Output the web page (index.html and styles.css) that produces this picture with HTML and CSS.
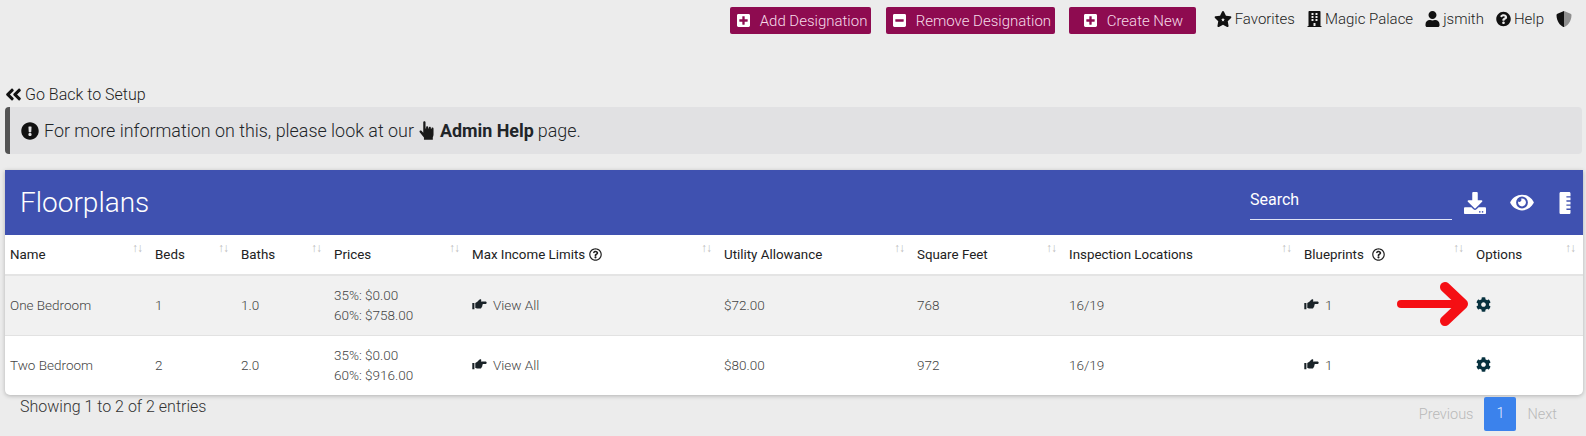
FILE: index.html
```html
<!DOCTYPE html>
<html lang="en">
<head>
    <meta charset="UTF-8">
    <title>Floorplans</title>
    <link rel="stylesheet" href="styles.css">
</head>
<body>
    <svg class="sprites" width="0" height="0">
        <symbol id="i-plus" viewBox="0 0 448 512"><path d="M400 32H48C21.5 32 0 53.5 0 80v352c0 26.5 21.5 48 48 48h352c26.5 0 48-21.5 48-48V80c0-26.5-21.5-48-48-48zm-32 252c0 6.6-5.4 12-12 12h-92v92c0 6.6-5.4 12-12 12h-56c-6.6 0-12-5.4-12-12v-92H92c-6.6 0-12-5.4-12-12v-56c0-6.6 5.4-12 12-12h92v-92c0-6.6 5.4-12 12-12h56c6.6 0 12 5.4 12 12v92h92c6.6 0 12 5.4 12 12v56z"/></symbol>
        <symbol id="i-minus" viewBox="0 0 448 512"><path d="M400 32H48C21.5 32 0 53.5 0 80v352c0 26.5 21.5 48 48 48h352c26.5 0 48-21.5 48-48V80c0-26.5-21.5-48-48-48zM92 296c-6.6 0-12-5.4-12-12v-56c0-6.6 5.4-12 12-12h264c6.6 0 12 5.4 12 12v56c0 6.6-5.4 12-12 12H92z"/></symbol>
        <symbol id="i-star" viewBox="0 0 576 512"><path fill-rule="evenodd" d="M259.3 17.8L194 150.2 47.9 171.5c-26.2 3.8-36.7 36.1-17.7 54.6l105.7 103-25 145.5c-4.5 26.3 23.2 46 46.4 33.7L288 439.6l130.7 68.7c23.2 12.2 50.9-7.4 46.4-33.7l-25-145.5 105.7-103c19-18.5 8.5-50.8-17.7-54.6L382 150.2 316.7 17.8c-11.7-23.6-45.6-23.9-57.4 0zM288 215l17 42 45 3-35 29 11 44-38-24-38 24 11-44-35-29 45-3z"/></symbol>
        <symbol id="i-building" viewBox="0 0 448 512"><path d="M436 480h-20V24c0-13.255-10.745-24-24-24H56C42.745 0 32 10.745 32 24v456H12c-6.627 0-12 5.373-12 12v20h448v-20c0-6.627-5.373-12-12-12zM128 76c0-6.627 5.373-12 12-12h40c6.627 0 12 5.373 12 12v40c0 6.627-5.373 12-12 12h-40c-6.627 0-12-5.373-12-12V76zm0 96c0-6.627 5.373-12 12-12h40c6.627 0 12 5.373 12 12v40c0 6.627-5.373 12-12 12h-40c-6.627 0-12-5.373-12-12v-40zm52 148h-40c-6.627 0-12-5.373-12-12v-40c0-6.627 5.373-12 12-12h40c6.627 0 12 5.373 12 12v40c0 6.627-5.373 12-12 12zm76 160h-64v-84c0-6.627 5.373-12 12-12h40c6.627 0 12 5.373 12 12v84zm64-172c0 6.627-5.373 12-12 12h-40c-6.627 0-12-5.373-12-12v-40c0-6.627 5.373-12 12-12h40c6.627 0 12 5.373 12 12v40zm0-96c0 6.627-5.373 12-12 12h-40c-6.627 0-12-5.373-12-12v-40c0-6.627 5.373-12 12-12h40c6.627 0 12 5.373 12 12v40zm0-96c0 6.627-5.373 12-12 12h-40c-6.627 0-12-5.373-12-12V76c0-6.627 5.373-12 12-12h40c6.627 0 12 5.373 12 12v40z"/></symbol>
        <symbol id="i-user" viewBox="0 0 448 512"><path d="M224 256c70.7 0 128-57.3 128-128S294.7 0 224 0 96 57.3 96 128s57.3 128 128 128zm89.6 32h-16.7c-22.2 10.2-46.9 16-72.9 16s-50.6-5.8-72.9-16h-16.7C60.2 288 0 348.2 0 422.4V464c0 26.5 21.5 48 48 48h352c26.5 0 48-21.5 48-48v-41.6c0-74.2-60.2-134.4-134.4-134.4z"/></symbol>
        <symbol id="i-help" viewBox="0 0 512 512"><path d="M504 256c0 136.997-111.043 248-248 248S8 392.997 8 256C8 119.083 119.043 8 256 8s248 111.083 248 248zM262.655 90c-54.497 0-89.255 22.957-116.549 63.758-3.536 5.286-2.353 12.415 2.715 16.258l34.699 26.31c5.205 3.947 12.621 3.008 16.665-2.122 17.864-22.658 30.113-35.797 57.303-35.797 20.429 0 45.698 13.148 45.698 32.958 0 14.976-12.363 22.667-32.534 33.976C247.128 238.528 216 254.941 216 296v4c0 6.627 5.373 12 12 12h56c6.627 0 12-5.373 12-12v-1.333c0-28.462 83.186-29.647 83.186-106.667 0-58.002-60.165-102-116.531-102zM256 338c-25.365 0-46 20.635-46 46 0 25.364 20.635 46 46 46s46-20.636 46-46c0-25.365-20.635-46-46-46z"/></symbol>
        <symbol id="i-help-outline" viewBox="0 0 512 512"><path d="M256 8C119.043 8 8 119.083 8 256c0 136.997 111.043 248 248 248s248-111.003 248-248C504 119.083 392.957 8 256 8zm0 448c-110.532 0-200-89.431-200-200 0-110.495 89.472-200 200-200 110.491 0 200 89.471 200 200 0 110.53-89.431 200-200 200zm107.244-255.2c0 67.052-72.421 68.084-72.421 92.863V300c0 6.627-5.373 12-12 12h-45.647c-6.627 0-12-5.373-12-12v-8.659c0-35.745 27.1-50.034 47.579-61.516 17.561-9.845 28.324-16.541 28.324-29.579 0-17.246-21.999-28.693-39.784-28.693-23.189 0-33.894 10.977-48.942 29.969-4.057 5.12-11.46 6.071-16.666 2.124l-27.824-21.098c-5.107-3.872-6.251-11.066-2.644-16.363C184.846 131.491 214.94 112 261.794 112c49.071 0 101.45 38.304 101.45 88.8zM298 368c0 23.159-18.841 42-42 42s-42-18.841-42-42 18.841-42 42-42 42 18.841 42 42z"/></symbol>
        <symbol id="i-shield" viewBox="0 0 512 512"><path fill="#8f8f8f" d="M256 2l210 82c18 7 30 24 30 44 0 221-136 345-222 380-12 5-24 5-36 0z"/><path d="M256 2c-6 0-12 1-18 2L46 84c-18 7-30 24-30 44 0 198 114 336 222 380 6 2 12 3 18 3z"/></symbol>
        <symbol id="i-back" viewBox="0 0 448 512"><path d="M223.7 239l136-136c9.4-9.4 24.6-9.4 33.9 0l22.6 22.6c9.4 9.4 9.4 24.6 0 33.9L319.9 256l96.4 96.4c9.4 9.4 9.4 24.6 0 33.9L393.7 409c-9.4 9.4-24.6 9.4-33.9 0l-136-136c-9.5-9.4-9.5-24.6-.1-34zm-192 34l136 136c9.4 9.4 24.6 9.4 33.9 0l22.6-22.6c9.4-9.4 9.4-24.6 0-33.9L127.9 256l96.4-96.4c9.4-9.4 9.4-24.6 0-33.9L201.7 103c-9.4-9.4-24.6-9.4-33.9 0l-136 136c-9.5 9.4-9.5 24.6-.1 34z"/></symbol>
        <symbol id="i-alert" viewBox="0 0 512 512"><path d="M504 256c0 136.997-111.043 248-248 248S8 392.997 8 256C8 119.083 119.043 8 256 8s248 111.083 248 248zm-248 50c-25.405 0-46 20.595-46 46s20.595 46 46 46 46-20.595 46-46-20.595-46-46-46zm-43.673-165.346l7.418 136c.347 6.364 5.609 11.346 11.982 11.346h48.546c6.373 0 11.635-4.982 11.982-11.346l7.418-136c.375-6.874-5.098-12.654-11.982-12.654h-63.383c-6.884 0-12.356 5.78-11.981 12.654z"/></symbol>
        <symbol id="i-pointer" viewBox="0 0 24 26"><path d="M6 1.5C6 .6 6.8 0 7.6 0s1.6.6 1.6 1.5V10h.8V8.600c0-.9.7-1.500 1.500-1.500s1.500.6 1.500 1.500V10h.8V9.300c0-.9.7-1.500 1.500-1.500s1.500.6 1.500 1.500V11h.7v-.8c0-.9.7-1.500 1.500-1.500s1.500.6 1.500 1.500V19c0 1.500-.5 2.500-1 3.500V26H7v-3L1 15.500c-1.200-1.500 1-3.500 2.500-2L6 16z"/></symbol>
        <symbol id="i-hand" viewBox="0 0 24 20"><path d="M0 6.500h3.500V17H0zM5 6.500c2-.3 3.500-1.800 5-3.500 1-1.200 2-2.300 3.500-2.500 1.200-.1 1.800 1 1.300 2.300l-.6 1.200h7.300c1.200 0 2.500.9 2.500 2.100 0 1.300-1.200 2.200-2.500 2.200h-4.300c.4 1 .2 2-.5 2.600.2 1.100-.2 2-1 2.500 0 1.500-1 2.600-2.500 2.600H9c-1.800 0-3-1-4-1z"/></symbol>
        <symbol id="i-cog" viewBox="0 0 512 512"><path d="M487.4 315.7l-42.6-24.6c4.3-23.2 4.3-47 0-70.2l42.6-24.6c4.9-2.8 7.1-8.6 5.500-14-11.100-35.600-30-67.800-54.700-94.600-3.800-4.100-10-5.100-14.800-2.300L380.800 110c-17.900-15.400-38.500-27.300-60.800-35.100V25.800c0-5.600-3.900-10.500-9.400-11.700-36.700-8.200-74.300-7.800-109.200 0-5.500 1.200-9.400 6.100-9.400 11.700V75c-22.200 7.900-42.800 19.800-60.800 35.100L88.700 85.500c-4.900-2.800-11-1.900-14.800 2.300-24.700 26.700-43.600 58.900-54.700 94.600-1.700 5.400.6 11.200 5.500 14L67.300 221c-4.300 23.200-4.300 47 0 70.200l-42.600 24.600c-4.900 2.800-7.100 8.600-5.500 14 11.100 35.600 30 67.800 54.700 94.600 3.800 4.100 10 5.100 14.800 2.300l42.600-24.600c17.900 15.400 38.500 27.300 60.800 35.100v49.200c0 5.600 3.900 10.500 9.400 11.700 36.700 8.200 74.300 7.800 109.200 0 5.500-1.200 9.400-6.100 9.400-11.700v-49.200c22.200-7.900 42.800-19.800 60.800-35.100l42.600 24.600c4.900 2.800 11 1.900 14.800-2.300 24.700-26.700 43.600-58.900 54.700-94.600 1.500-5.500-.7-11.300-5.600-14.100zM256 336c-44.100 0-80-35.900-80-80s35.900-80 80-80 80 35.900 80 80-35.900 80-80 80z"/></symbol>
        <symbol id="i-download" viewBox="0 0 512 512"><path d="M216 0h80c13.300 0 24 10.700 24 24v168h87.700c17.800 0 26.700 21.500 14.100 34.100L269.700 378.300c-7.500 7.500-19.800 7.500-27.300 0L90.100 226.100c-12.600-12.600-3.700-34.100 14.100-34.100H192V24c0-13.300 10.700-24 24-24zm296 376v112c0 13.300-10.700 24-24 24H24c-13.300 0-24-10.700-24-24V376c0-13.300 10.700-24 24-24h146.700l49 49c20.100 20.100 52.500 20.100 72.600 0l49-49H488c13.300 0 24 10.700 24 24zm-124 88c0-11-9-20-20-20s-20 9-20 20 9 20 20 20 20-9 20-20zm64 0c0-11-9-20-20-20s-20 9-20 20 9 20 20 20 20-9 20-20z"/></symbol>
        <symbol id="i-eye" viewBox="0 0 576 512"><path d="M572.520 241.400C518.290 135.590 410.930 64 288 64S57.680 135.640 3.480 241.410a32.350 32.350 0 0 0 0 29.190C57.710 376.410 165.070 448 288 448s230.320-71.640 284.520-177.410a32.350 32.350 0 0 0 0-29.190zM288 400a144 144 0 1 1 144-144 143.930 143.930 0 0 1-144 144zm0-240a95.310 95.310 0 0 0-25.310 3.790 47.850 47.850 0 0 1-66.900 66.900A95.780 95.780 0 1 0 288 160z"/></symbol>
        <symbol id="i-ruler" viewBox="0 0 256 512"><path d="M168 416c-4.420 0-8-3.580-8-8v-16c0-4.420 3.580-8 8-8h88v-64h-88c-4.420 0-8-3.580-8-8v-16c0-4.420 3.580-8 8-8h88v-64h-88c-4.420 0-8-3.580-8-8v-16c0-4.420 3.580-8 8-8h88v-64h-88c-4.420 0-8-3.580-8-8v-16c0-4.420 3.580-8 8-8h88V32c0-17.670-14.330-32-32-32H32C14.330 0 0 14.330 0 32v448c0 17.670 14.330 32 32 32h192c17.670 0 32-14.330 32-32v-64h-88z"/></symbol>
    </svg>

    <div class="topbar">
        <a class="btn btn-add"><svg class="btn-icon"><use href="#i-plus"/></svg>Add Designation</a>
        <a class="btn btn-remove"><svg class="btn-icon"><use href="#i-minus"/></svg>Remove Designation</a>
        <a class="btn btn-create"><svg class="btn-icon"><use href="#i-plus"/></svg>Create New</a>
        <nav class="user-nav">
            <a><svg class="nav-star"><use href="#i-star"/></svg>Favorites</a>
            <a><svg class="nav-icon"><use href="#i-building"/></svg>Magic Palace</a>
            <a><svg class="nav-icon"><use href="#i-user"/></svg>jsmith</a>
            <a><svg class="nav-icon"><use href="#i-help"/></svg>Help</a>
            <a><svg class="nav-shield"><use href="#i-shield"/></svg></a>
        </nav>
    </div>

    <a class="back-link"><svg class="back-icon"><use href="#i-back"/></svg>Go Back to Setup</a>

    <div class="notice">
        <svg class="notice-icon"><use href="#i-alert"/></svg>
        <span>For more information on this, please look at our</span>
        <svg class="notice-hand"><use href="#i-pointer"/></svg>
        <b>Admin Help</b>
        <span>page.</span>
    </div>

    <div class="card">
        <div class="card-head">
            <h2>Floorplans</h2>
            <div class="search">Search</div>
            <svg class="tool-download"><use href="#i-download"/></svg>
            <svg class="tool-eye"><use href="#i-eye"/></svg>
            <svg class="tool-ruler"><use href="#i-ruler"/></svg>
        </div>
        <table>
            <colgroup>
                <col class="c-name"><col class="c-beds"><col class="c-baths"><col class="c-prices"><col class="c-income">
                <col class="c-utility"><col class="c-feet"><col class="c-insp"><col class="c-blue"><col class="c-opts">
            </colgroup>
            <thead>
                <tr>
                    <th>Name<i class="sort">↑↓</i></th>
                    <th>Beds<i class="sort">↑↓</i></th>
                    <th>Baths<i class="sort">↑↓</i></th>
                    <th>Prices<i class="sort">↑↓</i></th>
                    <th>Max Income Limits <svg class="th-help"><use href="#i-help-outline"/></svg><i class="sort">↑↓</i></th>
                    <th>Utility Allowance<i class="sort">↑↓</i></th>
                    <th>Square Feet<i class="sort">↑↓</i></th>
                    <th>Inspection Locations<i class="sort">↑↓</i></th>
                    <th>Blueprints <svg class="th-help th-help-wide"><use href="#i-help-outline"/></svg><i class="sort">↑↓</i></th>
                    <th>Options<i class="sort">↑↓</i></th>
                </tr>
            </thead>
            <tbody>
                <tr class="odd">
                    <td>One Bedroom</td>
                    <td>1</td>
                    <td>1.0</td>
                    <td>35%: $0.00<br>60%: $758.00</td>
                    <td><svg class="hand"><use href="#i-hand"/></svg>View All</td>
                    <td>$72.00</td>
                    <td>768</td>
                    <td>16/19</td>
                    <td><svg class="hand"><use href="#i-hand"/></svg>1</td>
                    <td><svg class="cog"><use href="#i-cog"/></svg></td>
                </tr>
                <tr>
                    <td>Two Bedroom</td>
                    <td>2</td>
                    <td>2.0</td>
                    <td>35%: $0.00<br>60%: $916.00</td>
                    <td><svg class="hand"><use href="#i-hand"/></svg>View All</td>
                    <td>$80.00</td>
                    <td>972</td>
                    <td>16/19</td>
                    <td><svg class="hand"><use href="#i-hand"/></svg>1</td>
                    <td><svg class="cog"><use href="#i-cog"/></svg></td>
                </tr>
            </tbody>
        </table>
    </div>

    <div class="table-foot">
        <div class="entries">Showing 1 to 2 of 2 entries</div>
        <div class="pager">
            <span>Previous</span>
            <span class="current">1</span>
            <span>Next</span>
        </div>
    </div>

    <!-- annotation drawn over the screenshot -->
    <svg class="red-arrow" viewBox="0 0 72 44">
        <path d="M4 22H64" fill="none" stroke="#f50f14" stroke-width="8" stroke-linecap="round"/>
        <path d="M48 5l18 17-18 17" fill="none" stroke="#f50f14" stroke-width="10" stroke-linecap="round" stroke-linejoin="round"/>
    </svg>
</body>
</html>
```

FILE: styles.css
```css
body {
    margin: 0;
    height: 436px;
    overflow: hidden;
    position: relative;
    background-color: #ececec;
    font-family: Roboto, "Liberation Sans", sans-serif;
    font-weight: 300;
    color: #212529;
}

.sprites {
    position: absolute;
}

svg {
    fill: currentColor;
    flex: none;
}

/* top bar */
.topbar {
    display: flex;
    justify-content: flex-end;
    align-items: flex-start;
    padding: 7px 14px 0 0;
    height: 81px;
    box-sizing: border-box;
}

.btn {
    display: flex;
    align-items: center;
    height: 27px;
    box-sizing: border-box;
    background-color: #8e0b50;
    color: #f6dce9;
    border-radius: 2px;
    font-size: 15px;
    white-space: nowrap;
}

.btn-add {
    width: 141px;
    padding-left: 7px;
    margin-right: 15px;
}

.btn-remove {
    width: 169px;
    padding-left: 7px;
    margin-right: 14px;
}

.btn-create {
    width: 127px;
    padding-left: 15px;
    margin-right: 18px;
}

.btn-icon {
    width: 13px;
    height: 15px;
    margin-right: 10px;
    color: #fff;
}

.user-nav {
    display: flex;
    align-items: center;
    gap: 12px;
    height: 23px;
    font-size: 15px;
    color: #1d1d1d;
}

.user-nav a {
    display: flex;
    align-items: center;
}

.nav-star {
    width: 18px;
    height: 16px;
    margin-right: 3px;
    color: #111;
}

.nav-icon {
    width: 15px;
    height: 16px;
    margin-right: 3px;
    color: #111;
}

.nav-shield {
    width: 16px;
    height: 16px;
    color: #111;
}

/* back link and notice */
.back-link {
    display: flex;
    align-items: center;
    height: 26px;
    padding-left: 5px;
    font-size: 16px;
    color: #1d1d1d;
}

.back-icon {
    width: 17px;
    height: 19px;
    margin-right: 3px;
    color: #111;
}

.notice {
    display: flex;
    align-items: center;
    gap: 4px;
    height: 47px;
    box-sizing: border-box;
    margin: 0 4px 16px 5px;
    padding-left: 11px;
    background-color: #e1e1e3;
    border-left: 5px solid #555;
    border-radius: 4px;
    font-size: 17.9px;
}

.notice b {
    font-weight: 700;
}

.notice-icon {
    width: 18px;
    height: 18px;
    margin-right: 1px;
    color: #111;
}

.notice-hand {
    width: 17px;
    height: 19px;
    margin-left: 1px;
    color: #1a1a1a;
}

/* card */
.card {
    margin: 0 3px 0 5px;
    background-color: #fff;
    border-radius: 0 0 5px 5px;
    box-shadow: 0 1px 4px rgba(0, 0, 0, .25);
}

.card-head {
    display: flex;
    align-items: center;
    height: 65px;
    padding-left: 15px;
    background-color: #3f51b0;
    color: #fff;
}

.card-head h2 {
    margin: 0 auto 0 0;
    font-size: 28px;
    font-weight: 300;
}

.search {
    width: 202px;
    height: 34px;
    box-sizing: border-box;
    margin: 0 12px 0 0;
    padding-top: 4px;
    font-size: 16px;
    font-weight: 400;
    border-bottom: 1px solid #dfe3f5;
}

.tool-download {
    width: 22px;
    height: 22px;
    margin-right: 24px;
}

.tool-eye {
    width: 24px;
    height: 21px;
    margin-right: 25px;
}

.tool-ruler {
    width: 12px;
    height: 22px;
    margin-right: 12px;
}

table {
    width: 100%;
    table-layout: fixed;
    border-collapse: collapse;
    font-size: 13.35px;
}

.c-name { width: 145px; }
.c-beds { width: 86px; }
.c-baths { width: 93px; }
.c-prices { width: 138px; }
.c-income { width: 252px; }
.c-utility { width: 193px; }
.c-feet { width: 152px; }
.c-insp { width: 235px; }
.c-blue { width: 172px; }
.c-opts { width: 112px; }

th {
    position: relative;
    height: 39px;
    padding: 0 0 0 5px;
    text-align: left;
    font-weight: 400;
    color: #222;
    border-bottom: 2px solid #e4e4e4;
}

td {
    height: 57px;
    padding: 0 0 2px 5px;
    font-size: 13.5px;
    line-height: 20px;
    color: #444;
    border-bottom: 1px solid #e2e2e2;
}

tbody tr:last-child td {
    border-bottom: 0;
}

tr.odd td {
    background-color: #f1f1f1;
}

.sort {
    position: absolute;
    top: 6px;
    right: 8px;
    font-size: 12px;
    font-style: normal;
    letter-spacing: -1px;
    color: #bdbdbd;
}

.th-help {
    width: 13px;
    height: 13px;
    margin-left: 1px;
    vertical-align: -2px;
    color: #222;
}

.th-help-wide {
    margin-left: 5px;
}

.hand {
    width: 15px;
    height: 12px;
    margin-right: 6px;
    vertical-align: -1px;
    color: #1a2328;
}

.cog {
    width: 15px;
    height: 15px;
    color: #07323f;
    vertical-align: -2px;
}

/* footer */
.table-foot {
    display: flex;
    justify-content: space-between;
    align-items: flex-start;
    padding: 2px 29px 0 20px;
}

.entries {
    font-size: 16px;
    color: #333;
}

.pager {
    display: flex;
    align-items: center;
    gap: 11px;
    font-size: 14.5px;
    color: #b9b9b9;
}

.pager .current {
    width: 32px;
    height: 34px;
    line-height: 34px;
    text-align: center;
    background-color: #3b82ec;
    color: #e6f0ff;
    border-radius: 2px;
}

.red-arrow {
    position: absolute;
    left: 1397px;
    top: 282px;
    width: 72px;
    height: 44px;
}
```
